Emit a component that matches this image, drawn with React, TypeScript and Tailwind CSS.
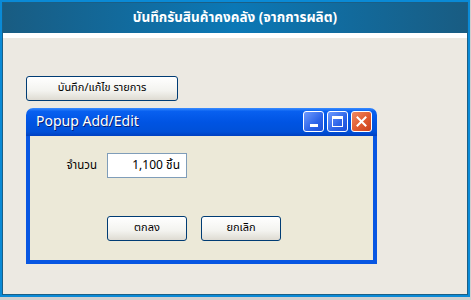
import React from 'react';

const font = { fontFamily: 'Tahoma, "Noto Sans Thai", "Noto Sans", "DejaVu Sans", sans-serif' };

export default function App() {
  return (
    <div className="w-[471px] h-[300px] bg-[#cfcfcf]" style={font}>
      <div className="w-[470px] h-[297px] border-2 border-[#0a8ad6] bg-[#1a5f86] p-px flex flex-col">
        {/* Header */}
        <div className="h-[30px] shrink-0 flex items-center justify-center bg-[linear-gradient(90deg,#195c82_0%,#0b78b6_50%,#195c82_100%)]">
          <span className="text-white font-bold text-[13.5px]">บันทึกรับสินค้าคงคลัง (จากการผลิต)</span>
        </div>
        <div className="h-[5px] bg-white shrink-0"></div>

        {/* Body */}
        <div className="flex-1 bg-[#ece9e2] pl-[23px] pt-[36px]">
          <button className="w-[152px] h-[25px] rounded-[3px] border border-[#003c74] bg-[linear-gradient(180deg,#ffffff_0%,#f3f3ef_60%,#dedbd2_100%)] text-[11px] text-black">
            บันทึก/แก้ไข รายการ
          </button>

          {/* Popup window */}
          <div className="mt-[7px] w-[351px] h-[156px] flex flex-col">
            <div className="h-[28px] shrink-0 rounded-t-[7px] bg-[linear-gradient(180deg,#3a8cff_0%,#0860f0_12%,#0054e3_50%,#0050d8_85%,#0040c0_100%)] flex items-center pl-[10px] pr-[5px]">
              <span className="text-white text-[14px] flex-1 [text-shadow:1px_1px_0_#0a1c6e]">Popup Add/Edit</span>
              <div className="flex gap-[3px]">
                <div className="w-[21px] h-[21px] rounded-[3px] border border-white bg-[linear-gradient(135deg,#6f9bff_0%,#2b63e8_60%,#1b4fd8_100%)] flex items-end justify-center pb-[4px]">
                  <div className="w-[8px] h-[3px] bg-white"></div>
                </div>
                <div className="w-[21px] h-[21px] rounded-[3px] border border-white bg-[linear-gradient(135deg,#6f9bff_0%,#2b63e8_60%,#1b4fd8_100%)] flex items-center justify-center">
                  <div className="w-[11px] h-[11px] border border-white border-t-[3px]"></div>
                </div>
                <div className="w-[21px] h-[21px] rounded-[3px] border border-white bg-[linear-gradient(135deg,#f08a64_0%,#e05a30_55%,#c8401c_100%)] flex items-center justify-center">
                  <svg width="11" height="11" viewBox="0 0 11 11">
                    <path d="M1.5 1.5 L9.5 9.5 M9.5 1.5 L1.5 9.5" stroke="white" strokeWidth="2" strokeLinecap="square" />
                  </svg>
                </div>
              </div>
            </div>
            <div className="flex-1 border-x-4 border-b-4 border-[#0856e2] bg-[#ece9d8] pt-[17px]">
              <div className="flex items-center h-[25px]">
                <span className="w-[77px] text-right pr-[10px] text-[11.5px] text-black">จำนวน</span>
                <div className="w-[80px] h-[25px] border border-[#7f9db9] bg-white flex items-center justify-end pr-[6px] text-[12px] text-black">
                  1,100 ชิ้น
                </div>
              </div>
              <div className="flex gap-[14px] pl-[77px] mt-[38px]">
                <button className="w-[80px] h-[25px] rounded-[3px] border border-[#003c74] bg-[linear-gradient(180deg,#ffffff_0%,#f3f3ef_60%,#dedbd2_100%)] text-[11px] text-black">
                  ตกลง
                </button>
                <button className="w-[80px] h-[25px] rounded-[3px] border border-[#003c74] bg-[linear-gradient(180deg,#ffffff_0%,#f3f3ef_60%,#dedbd2_100%)] text-[11px] text-black">
                  ยกเลิก
                </button>
              </div>
            </div>
          </div>
        </div>
      </div>
    </div>
  );
}
